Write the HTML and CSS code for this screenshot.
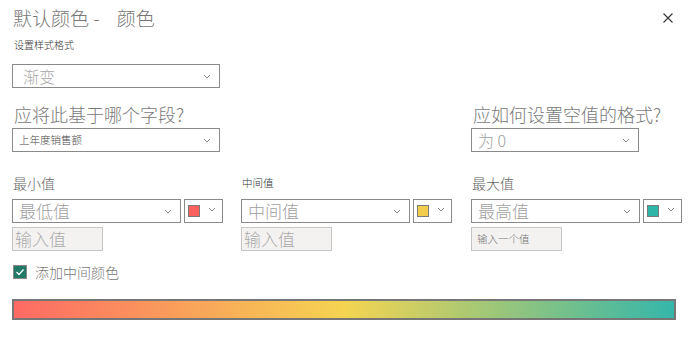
FILE: index.html
```html
<!DOCTYPE html>
<html lang="zh-CN">
<head>
    <meta charset="UTF-8">
    <title>默认颜色 - 颜色</title>
    <link rel="stylesheet" href="styles.css">
</head>
<body>
    <div class="panel">
        <div class="head">
            <h1 class="title">默认颜色 - <span class="title-gap"></span>颜色</h1>
            <span class="close">
                <svg width="10" height="10" viewBox="0 0 10 10"><path d="M0.5 0.5 L9.5 9.5 M9.5 0.5 L0.5 9.5" stroke="#333" stroke-width="1.1" fill="none"/></svg>
            </span>
        </div>

        <div class="label-sm">设置样式格式</div>
        <div class="select select-style">
            <span class="ph-big">渐变</span>
            <svg class="chev" width="8" height="5" viewBox="0 0 8 5"><polyline points="1,1 4,4 7,1" stroke="#8a8a8a" fill="none"/></svg>
        </div>

        <div class="q-row">
            <div>
                <div class="q">应将此基于哪个字段?</div>
                <div class="select select-field">
                    <span class="val-sm">上年度销售额</span>
                    <svg class="chev" width="8" height="5" viewBox="0 0 8 5"><polyline points="1,1 4,4 7,1" stroke="#8a8a8a" fill="none"/></svg>
                </div>
            </div>
            <div></div>
            <div>
                <div class="q">应如何设置空值的格式?</div>
                <div class="select select-blank">
                    <span class="ph">为 0</span>
                    <svg class="chev" width="8" height="5" viewBox="0 0 8 5"><polyline points="1,1 4,4 7,1" stroke="#8a8a8a" fill="none"/></svg>
                </div>
            </div>
        </div>

        <div class="values">
            <div class="col">
                <div class="v-label">最小值</div>
                <div class="pair">
                    <div class="select select-val">
                        <span class="ph">最低值</span>
                        <svg class="chev" width="8" height="5" viewBox="0 0 8 5"><polyline points="1,1 4,4 7,1" stroke="#8a8a8a" fill="none"/></svg>
                    </div>
                    <div class="color">
                        <span class="swatch swatch-red"></span>
                        <svg class="chev" width="8" height="5" viewBox="0 0 8 5"><polyline points="1,1 4,4 7,1" stroke="#8a8a8a" fill="none"/></svg>
                    </div>
                </div>
                <div class="input">输入值</div>
            </div>
            <div class="col">
                <div class="v-label v-label-sm">中间值</div>
                <div class="pair">
                    <div class="select select-val">
                        <span class="ph">中间值</span>
                        <svg class="chev" width="8" height="5" viewBox="0 0 8 5"><polyline points="1,1 4,4 7,1" stroke="#8a8a8a" fill="none"/></svg>
                    </div>
                    <div class="color">
                        <span class="swatch swatch-yellow"></span>
                        <svg class="chev" width="8" height="5" viewBox="0 0 8 5"><polyline points="1,1 4,4 7,1" stroke="#8a8a8a" fill="none"/></svg>
                    </div>
                </div>
                <div class="input">输入值</div>
            </div>
            <div class="col">
                <div class="v-label">最大值</div>
                <div class="pair">
                    <div class="select select-val">
                        <span class="ph">最高值</span>
                        <svg class="chev" width="8" height="5" viewBox="0 0 8 5"><polyline points="1,1 4,4 7,1" stroke="#8a8a8a" fill="none"/></svg>
                    </div>
                    <div class="color">
                        <span class="swatch swatch-teal"></span>
                        <svg class="chev" width="8" height="5" viewBox="0 0 8 5"><polyline points="1,1 4,4 7,1" stroke="#8a8a8a" fill="none"/></svg>
                    </div>
                </div>
                <div class="input input-sm">输入一个值</div>
            </div>
        </div>

        <div class="check">
            <span class="box">
                <svg width="10" height="8" viewBox="0 0 10 8"><polyline points="1.5,4 4,6.5 8.5,1.5" stroke="#fff" stroke-width="1.3" fill="none"/></svg>
            </span>
            <span class="check-label">添加中间颜色</span>
        </div>

        <div class="bar"></div>
    </div>
</body>
</html>
```

FILE: styles.css
```css
body {
    margin: 0;
    background: #fff;
}

.panel {
    width: 688px;
    height: 342px;
    box-sizing: border-box;
    padding: 0 15px 0 12px;
    font-family: "Noto Sans CJK SC", "Noto Sans", sans-serif;
    font-weight: 300;
    color: #666;
    background: #fff;
}

.head {
    display: flex;
    justify-content: space-between;
    align-items: flex-start;
    height: 38px;
}

.title {
    margin: 0;
    padding-left: 1px;
    font-size: 19px;
    font-weight: 300;
    line-height: 36px;
    color: #777;
}

.title-gap {
    display: inline-block;
    width: 13px;
}

.close {
    display: flex;
    margin-top: 13px;
}

.label-sm {
    padding-left: 2px;
    font-size: 10px;
    line-height: 14px;
    color: #333;
}

.select {
    display: flex;
    align-items: center;
    justify-content: space-between;
    box-sizing: border-box;
    height: 24px;
    border: 1px solid #8a8a8a;
    padding: 0 8px 0 6px;
    background: #fff;
}

.select-style {
    width: 208px;
    margin-top: 12px;
    padding-left: 10px;
}

.ph-big {
    font-size: 16px;
    line-height: 22px;
    color: #a8a8a8;
}

.ph {
    font-size: 16px;
    line-height: 22px;
    color: #a0a0a0;
}

.chev {
    flex: none;
}

.q-row {
    display: grid;
    grid-template-columns: 229px 230px 1fr;
    margin-top: 14px;
}

.q {
    padding-left: 2px;
    margin-bottom: 2px;
    font-size: 18px;
    line-height: 24px;
    color: #7a7a7a;
}

.select-field {
    width: 208px;
}

.val-sm {
    font-size: 10.5px;
    line-height: 22px;
    color: #444;
}

.select-blank {
    width: 168px;
}

.values {
    display: grid;
    grid-template-columns: 229px 230px 1fr;
    margin-top: 21px;
}

.v-label {
    padding-left: 1px;
    font-size: 14px;
    line-height: 20px;
    color: #666;
}

.v-label-sm {
    font-size: 10.5px;
    color: #333;
}

.pair {
    display: flex;
    gap: 3px;
    margin-top: 6px;
}

.select-val {
    width: 169px;
}

.select-val .ph {
    font-size: 17px;
}

.color {
    display: flex;
    justify-content: space-between;
    align-items: flex-start;
    box-sizing: border-box;
    width: 39px;
    height: 24px;
    border: 1px solid #8a8a8a;
    padding: 5px 6px 0 3px;
}

.color .chev {
    margin-top: 2px;
}

.swatch {
    box-sizing: border-box;
    width: 12px;
    height: 12px;
    border: 1px solid #7a7a7a;
}

.swatch-red {
    background: #fd625e;
}

.swatch-yellow {
    background: #f2cd4c;
}

.swatch-teal {
    background: #2fb5a8;
}

.input {
    box-sizing: border-box;
    width: 91px;
    height: 24px;
    margin-top: 4px;
    padding-left: 2px;
    border: 1px solid #c8c6c4;
    background: #f3f2f1;
    font-size: 17px;
    line-height: 22px;
    color: #aaa;
}

.input-sm {
    padding-left: 5px;
    font-size: 10.5px;
    color: #777;
}

.check {
    display: flex;
    align-items: center;
    gap: 8px;
    margin-top: 14px;
    padding-left: 1px;
    height: 14px;
}

.box {
    display: flex;
    align-items: center;
    justify-content: center;
    box-sizing: border-box;
    width: 14px;
    height: 14px;
    border: 1px solid #8a8a8a;
    background: #207866;
}

.check-label {
    font-size: 14px;
    line-height: 14px;
    color: #7a7a7a;
}

.bar {
    box-sizing: border-box;
    width: 664px;
    height: 21px;
    margin-top: 20px;
    border: 2px solid #767676;
    background: linear-gradient(to right, #fd6a64, #f5d451 50%, #35b6a9);
}
```
